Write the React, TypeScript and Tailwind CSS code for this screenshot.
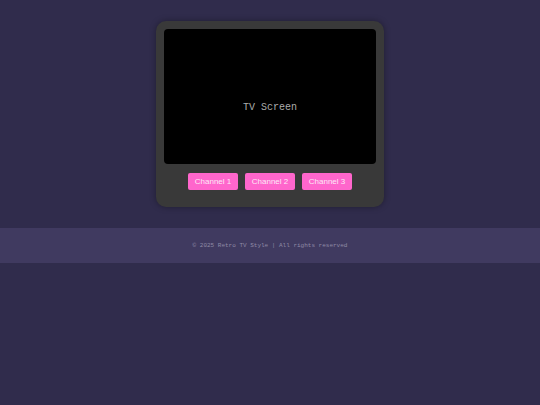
const channels = ["Channel 1", "Channel 2", "Channel 3"];

export default function App() {
  return (
    <div className="min-h-screen bg-[#302c4c] pt-[21px]">
      {/* TV set */}
      <div className="mx-auto w-[228px] rounded-[10px] bg-[#393939] px-2 pt-2 pb-[17px] shadow-[0_0_6px_rgba(0,0,0,0.35)]">
        <div className="flex h-[135px] items-center justify-center rounded-[4px] bg-black pt-[22px]">
          <span className="text-[10px] text-[#acacac] font-['Liberation_Mono',monospace]">
            TV Screen
          </span>
        </div>
        <div className="mt-[9px] flex justify-center gap-[7px]">
          {channels.map((c) => (
            <button
              key={c}
              className="h-[17px] w-[50px] rounded-[2px] bg-[#ff66cc] text-[8px] text-[#fde8f6] font-['Liberation_Sans',sans-serif]"
            >
              {c}
            </button>
          ))}
        </div>
      </div>

      {/* Footer */}
      <footer className="mt-[21px] flex h-[35px] items-center justify-center bg-[#403a60]">
        <p className="text-[6px] text-[#8f8aa6] font-['Liberation_Mono',monospace]">
          © 2025 Retro TV Style | All rights reserved
        </p>
      </footer>
    </div>
  );
}
